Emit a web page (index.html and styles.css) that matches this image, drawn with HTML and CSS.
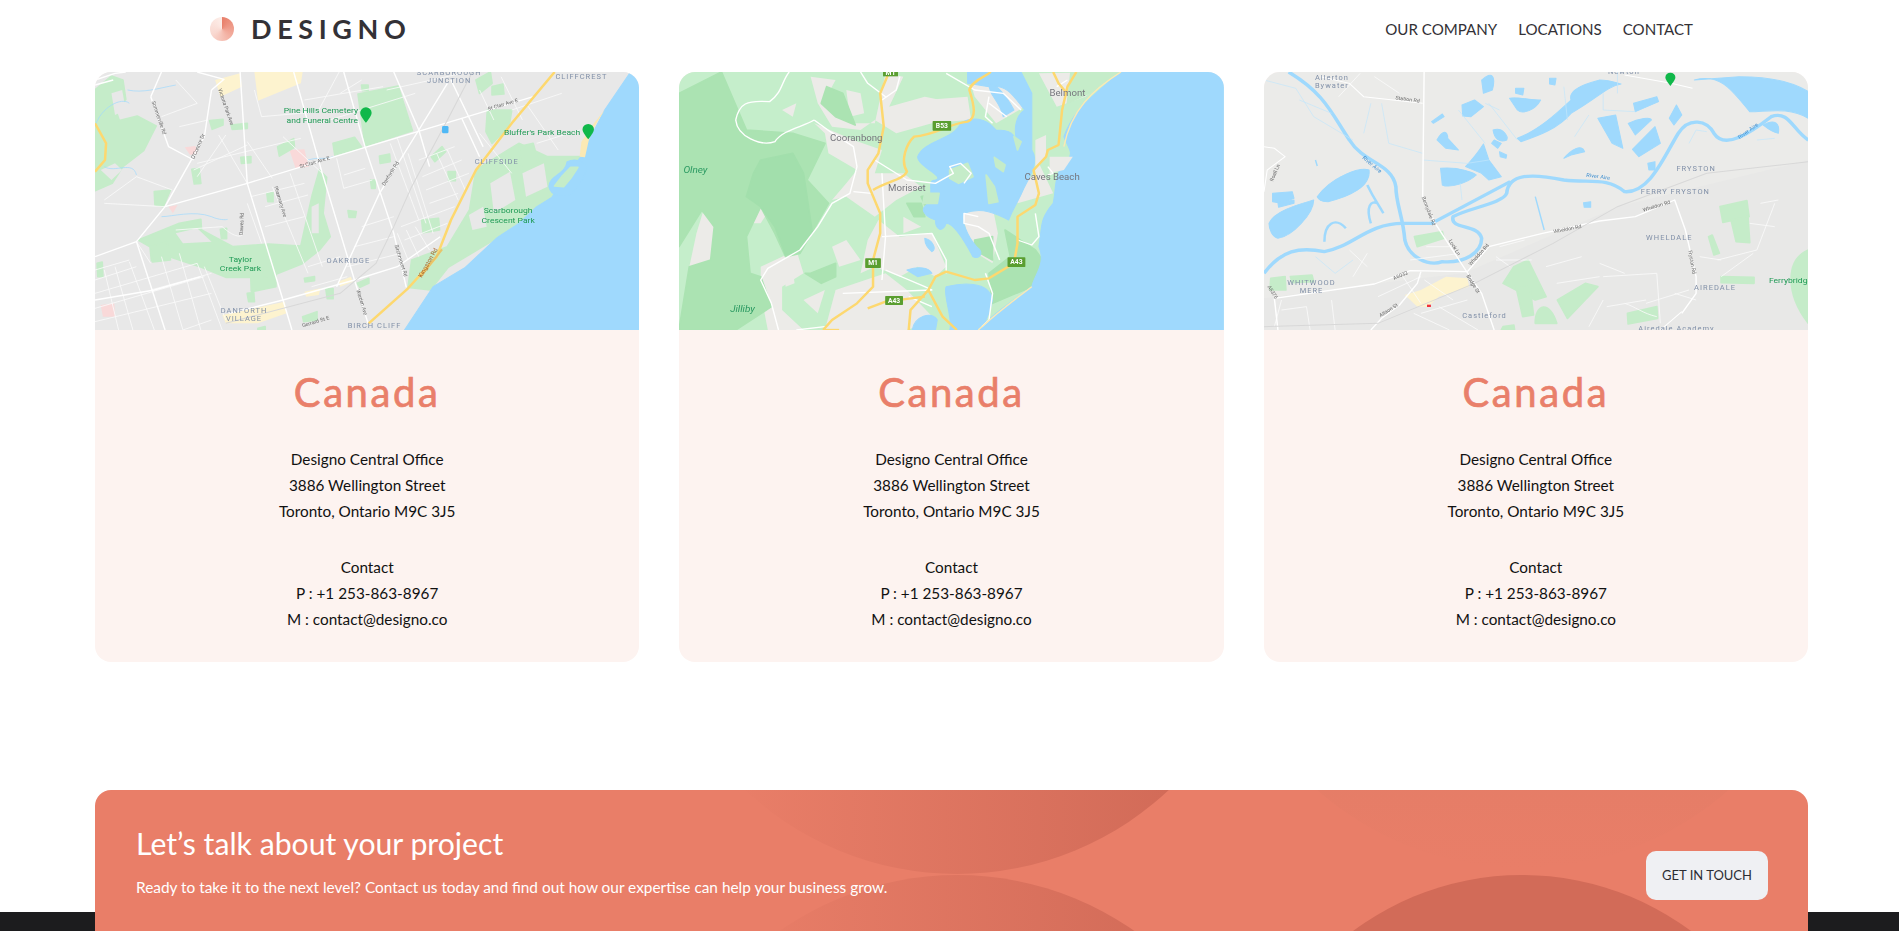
FILE: index.html
```html
<!DOCTYPE html>
<html lang="en">
<head>
<meta charset="utf-8">
<title>Designo - Locations</title>
<link rel="stylesheet" href="styles.css">
</head>
<body>
<header class="topbar">
  <a class="brand" href="#"><span class="brand-mark"></span><span class="brand-name">DESIGNO</span></a>
  <nav class="nav">
    <a href="#">OUR COMPANY</a>
    <a href="#">LOCATIONS</a>
    <a href="#">CONTACT</a>
  </nav>
</header>

<main class="cards">
  <article class="card">
    <svg class="map" viewBox="14 36 1523 774" preserveAspectRatio="none" xmlns="http://www.w3.org/2000/svg">
      <rect class="land-grey" x="14" y="36" width="1523" height="774"/>
      <g class="block">
        <polygon points="460,36 595,36 590,70 470,122"/>
        <polygon points="350,60 420,40 425,80 365,110"/>
        <polygon points="370,765 545,725 550,760 470,790 380,790"/>
        <polygon points="600,695 645,685 640,705 605,710"/>
        <polygon points="695,665 730,650 735,665 700,680"/>
      </g>
      <g class="pink">
        <polygon points="558,270 600,268 612,320 575,325"/>
        <polygon points="265,262 295,258 300,280 280,285"/>
        <polygon points="30,735 68,730 70,770 36,770"/>
        <polygon points="220,440 245,435 232,460"/>
      </g>
      <g class="park">
        <polygon points="14,90 60,48 92,60 100,118 72,150 82,182 132,168 185,198 150,272 92,320 62,370 14,392"/>
        <polygon points="750,102 862,78 902,212 770,258"/>
        <polygon points="135,540 250,490 310,478 312,510 400,560 500,552 590,558 602,500 622,405 642,330 662,352 652,460 672,530 642,570 592,612 522,642 502,682 452,692 452,652 380,652 312,622 222,590 172,602 168,560"/>
        <polygon points="1112,150 1180,150 1172,200 1125,250 1108,215"/>
        <polygon points="1080,330 1200,250 1280,290 1372,290 1292,412 1142,532 1002,622 952,690 890,682 900,600 1000,560 1062,450"/>
        <polygon points="680,250 740,232 760,262 685,285"/>
        <polygon points="525,260 570,236 572,262 530,288"/>
        <polygon points="1080,60 1120,36 1125,70 1090,100"/>
        <polygon points="1125,80 1155,72 1158,102 1125,105"/>
        <polygon points="955,290 985,260 995,275 965,305"/>
        <polygon points="928,480 975,475 978,510 932,518"/>
        <polygon points="1002,335 1022,335 1022,362 1004,362"/>
        <polygon points="810,288 838,282 840,305 812,310"/>
        <polygon points="422,292 450,290 450,308 424,310"/>
        <polygon points="285,328 305,325 310,370 292,372"/>
        <polygon points="722,452 745,455 742,472 725,472"/>
        <polygon points="365,508 382,505 382,536 368,536"/>
        <polygon points="180,395 225,390 205,440 182,435"/>
        <polygon points="495,400 512,398 512,425 498,425"/>
        <polygon points="335,182 372,178 372,195 342,208"/>
        <polygon points="395,195 440,190 440,205 398,208"/>
        <polygon points="760,75 778,75 778,92 762,92"/>
        <polygon points="450,652 520,650 520,680 452,695"/>
        <polygon points="440,700 458,698 460,725 444,725"/>
        <polygon points="595,770 635,755 635,780 598,785"/>
        <polygon points="660,686 680,686 680,716 664,716"/>
        <polygon points="470,805 490,800 490,810 470,810"/>
        <polygon points="785,360 798,360 798,385 788,385"/>
        <polygon points="600,655 628,650 628,662 602,666"/>
        <polygon points="748,670 780,655 780,670 755,682"/>
        <polygon points="20,610 34,606 36,650 22,650"/>
        <polygon points="170,560 215,545 225,600 175,606"/>
        <polygon points="1200,260 1240,250 1260,330 1210,345"/>
      </g>
      <g class="land-holes">
        <polygon points="60,100 90,90 100,150 70,165"/>
        <polygon points="30,330 70,310 90,330 60,360"/>
        <polygon points="1120,370 1175,335 1190,420 1130,460"/>
        <polygon points="1210,340 1270,310 1280,380 1220,410"/>
        <polygon points="240,520 300,505 340,545 260,550"/>
        <polygon points="620,440 640,430 640,520 620,520"/>
        <polygon points="1060,465 1100,440 1110,500 1070,510"/>
      </g>
      <polygon class="water" points="880,810 960,680 1050,622 1140,532 1200,490 1250,440 1292,412 1372,292 1440,150 1510,40 1537,36 1537,810"/>
      <path class="water-fill" d="M1284 380 C1285 345 1330 345 1335 305 C1355 295 1385 300 1388 325 C1385 360 1370 370 1345 405 C1320 410 1290 410 1284 380 Z"/>
      <polygon class="park" points="1320,350 1345,322 1365,322 1345,355 1325,380 1300,378"/>
      <polygon class="sand" points="1370,290 1375,245 1410,190 1440,150 1400,220 1385,292"/>
      <g class="river">
        <path d="M14 200 C30 140 90 110 110 130 M40 320 C70 340 120 300 130 345 M200 470 C230 470 290 450 340 470 C360 480 380 480 385 478 M610 300 C640 290 660 300 680 290 M105 90 C150 100 190 85 240 75"/>
      </g>
      <g class="minor">
        <path d="M300 350 L380 225 M290 330 L440 255 M300 310 L590 235 M360 225 L440 370 M440 245 L510 355 M540 230 L650 340 M640 190 L910 100 M830 90 L1040 40 M460 90 L480 170 L640 155 M600 120 L820 80 M640 150 L700 30"/>
        <path d="M690 295 L710 385 L790 360 M710 345 L770 325 M840 250 L920 480 M860 235 L940 490 M920 300 L1020 260 M930 350 L1040 300 M940 390 L1060 340 M950 430 L1030 400 M870 500 L1020 440 M880 540 L1000 490 M860 520 L890 600 M885 510 L920 590 M910 500 L950 570 M890 280 L960 520 M970 280 L1030 420 M1000 270 L1050 390"/>
        <path d="M14 660 L130 620 M14 700 L300 610 M40 630 L80 810 M70 620 L120 810 M110 605 L180 810 M200 590 L260 810 M250 580 L310 810 M300 610 L370 810 M14 745 L320 650 M14 785 L340 700 M130 545 L170 610 M170 690 L340 640 M320 620 L380 780 M14 630 L110 600 M260 810 L340 780"/>
        <path d="M450 410 L600 370 M490 440 L610 405 M490 500 L600 470 M510 380 L610 640 M560 340 L650 620 M610 620 L700 590 M620 680 L720 650 M760 500 L850 470 M740 560 L850 530 M720 620 L870 580 M130 350 L230 390 M40 430 L210 440 M40 420 L130 350 M240 510 L370 500 C390 520 420 540 430 520 M1090 90 L1130 180 M1150 50 L1210 180 M1220 130 L1310 270 M1180 150 L1320 100 M1250 250 L1370 210 M1090 220 L1180 340 M440 430 L480 550 M700 100 L760 60 M240 60 L300 130 L200 170 M250 200 L330 180"/>
      </g>
      <g class="road">
        <path d="M14 590 L130 545 L210 440 L440 370 L770 262 L1040 175 L1240 110"/>
        <path d="M420 36 L440 370 L540 720 L565 810"/>
        <path d="M570 36 L650 340 L740 660 L778 790"/>
        <path d="M710 36 L770 262 L850 520 L885 682"/>
        <path d="M850 36 L920 210 L950 320"/>
        <path d="M1000 70 L920 210 L810 400 L690 680"/>
        <path d="M130 545 L210 810"/>
        <path d="M340 90 L320 230 L210 440"/>
        <path d="M170 110 L220 260 L290 300"/>
        <path d="M14 60 L70 40 L100 36 M14 75 L65 60 M300 36 L375 58 L340 90 M200 36 L170 110"/>
        <path d="M14 720 L180 690 L310 650 M390 760 L540 720 L740 660 L860 620 L980 530"/>
        <path d="M1010 60 L1100 260 M1040 175 L1090 290"/>
      </g>
      <path class="rail" d="M1070 36 L1000 180 L900 380 L850 500 L800 610 L700 700 L380 790"/>
      <g class="hwy">
        <path d="M780 790 L890 685 L970 590 L1010 480 L1080 330 L1180 190 L1300 36"/>
        <path d="M14 190 L45 250 L42 300 L14 335"/>
      </g>
      <path class="hwy-brown" d="M925 650 L985 568"/>
      <rect class="transit" x="985" y="198" width="18" height="22" rx="4"/>
      <path class="pin" d="M772 188 C758 170 756 162 756 158 A16 16 0 1 1 788 158 C788 162 786 170 772 188 Z"/>
      <path class="pin" d="M1394 238 C1380 220 1378 212 1378 208 A16 16 0 1 1 1410 208 C1410 212 1408 220 1394 238 Z"/>
      <g class="lbl-green">
        <text x="646" y="160" text-anchor="middle">Pine Hills Cemetery</text>
        <text x="650" y="188" text-anchor="middle">and Funeral Centre</text>
        <text x="1265" y="224" text-anchor="middle">Bluffer's Park Beach</text>
        <text x="1170" y="460" text-anchor="middle">Scarborough</text>
        <text x="1170" y="488" text-anchor="middle">Crescent Park</text>
        <text x="421" y="606" text-anchor="middle">Taylor</text>
        <text x="421" y="634" text-anchor="middle">Creek Park</text>
      </g>
      <g class="lbl-area">
        <text x="1005" y="44" text-anchor="middle">SCARBOROUGH</text>
        <text x="1005" y="70" text-anchor="middle">JUNCTION</text>
        <text x="1375" y="56" text-anchor="middle">CLIFFCREST</text>
        <text x="1138" y="311" text-anchor="middle">CLIFFSIDE</text>
        <text x="723" y="608" text-anchor="middle">OAKRIDGE</text>
        <text x="431" y="759" text-anchor="middle">DANFORTH</text>
        <text x="431" y="784" text-anchor="middle">VILLAGE</text>
        <text x="796" y="804" text-anchor="middle">BIRCH CLIFF</text>
      </g>
      <g class="lbl-road">
        <text transform="translate(1115,152) rotate(-18)">St Clair Ave E</text>
        <text transform="translate(588,325) rotate(-18)">St Clair Ave E</text>
        <text transform="translate(825,378) rotate(-60)">Danforth Rd</text>
        <text transform="translate(292,298) rotate(-68)">O'Connor Dr</text>
        <text transform="translate(172,125) rotate(72)">Sommerville Rd</text>
        <text transform="translate(358,88) rotate(72)">Victoria Park Ave</text>
        <text transform="translate(515,380) rotate(74)">Pharmacy Ave</text>
        <text transform="translate(428,525) rotate(-88)">Dawes Rd</text>
        <text transform="translate(852,556) rotate(74)">Birchmount Rd</text>
        <text transform="translate(745,690) rotate(74)">Warden Ave</text>
        <text transform="translate(595,802) rotate(-18)">Gerrard St E</text>
      </g>
      <text class="lbl-hwy" transform="translate(928,654) rotate(-62)">Kingston Rd</text>
    </svg>
    <div class="card-body">
      <h2>Canada</h2>
      <p>Designo Central Office<br>3886 Wellington Street<br>Toronto, Ontario M9C 3J5</p>
      <p>Contact<br>P : +1 253-863-8967<br>M : contact@designo.co</p>
    </div>
  </article>

  <article class="card">
    <svg class="map" viewBox="11 36 1526 774" preserveAspectRatio="none" xmlns="http://www.w3.org/2000/svg">
      <rect class="land-green" x="11" y="36" width="1526" height="774"/>
      <g class="grey-patch">
        <polygon points="380,50 450,60 430,100 500,190 560,190 590,40 640,50 600,140 700,110 790,130 780,180 720,190 620,220 560,180 520,210 440,200 400,130"/>
        <polygon points="390,190 500,240 580,270 560,340 640,340 690,380 620,420 560,470 520,440 480,410 440,420 480,370 510,330 430,280 420,220"/>
        <polygon points="570,480 630,530 720,520 760,620 730,650 680,620 630,650 560,620 520,640 540,540"/>
        <polygon points="240,620 300,590 340,570 360,640 300,680 300,750 360,810 260,810 240,700"/>
        <polygon points="450,690 590,640 650,690 730,780 650,810 420,810"/>
        <polygon points="805,460 890,440 905,520 890,610 830,570"/>
        <polygon points="820,40 940,40 980,140 900,190 840,110"/>
        <polygon points="80,450 110,500 100,600 40,620 60,520"/>
        <polygon points="1020,40 1240,36 1150,110 1070,140 1040,80"/>
        <polygon points="960,430 1060,400 1020,310 1000,350 950,390"/>
        <polygon points="440,560 480,540 520,600 460,620"/>
        <polygon points="700,120 820,110 830,180 700,190"/>
        <polygon points="305,640 330,630 335,670 310,680"/>
        <polygon points="200,440 270,440 240,490 205,490"/>
        <polygon points="480,90 520,100 530,160 490,170"/>
        <polygon points="300,150 340,130 330,170"/>
        <polygon points="640,470 690,500 640,520"/>
        <polygon points="360,720 420,690 400,760"/>
      </g>
      <g class="park-dark">
        <polygon points="11,100 130,36 200,210 330,220 420,250 370,360 430,430 350,580 310,590 280,520 240,440 200,530 210,640 240,650 270,740 170,810 11,810 40,620 100,600 110,500 75,450 11,560"/>
        <polygon points="425,80 470,100 505,195 450,170 410,130"/>
        <polygon points="380,640 450,610 450,650 410,670 365,640"/>
        <polygon points="650,430 690,430 700,470 670,470"/>
        <polygon points="690,410 740,400 730,430 700,435"/>
        <polygon points="840,540 890,530 890,600 840,570"/>
        <polygon points="925,510 1010,570 1030,600 1000,680 890,730 880,640 940,590"/>
      </g>
      <polygon class="park-darker" points="240,300 330,280 360,340 385,520 350,570 310,585 280,500 240,440 200,410 220,340"/>
      <path class="water-fill" d="M1250 36 L1537 36 L1537 810 L850 810 C900 750 980 700 1000 680 C1010 640 1040 610 1020 560 C1030 500 1020 480 1060 430 C1070 380 1060 340 1100 300 C1120 280 1100 260 1090 230 C1110 170 1140 130 1250 36 Z"/>
      <path class="water-fill" d="M820 36 L970 36 L1000 100 L1000 270 C1020 300 1000 340 980 380 C960 430 950 440 935 480 C900 460 860 440 810 460 C800 480 820 530 845 560 C870 580 850 600 835 590 C810 540 780 490 760 490 C750 520 730 510 730 480 C700 470 690 450 700 440 C735 410 700 360 730 360 C760 350 680 320 680 290 C700 240 780 240 800 190 C830 170 870 170 900 210 C940 210 950 220 960 250 C950 220 950 170 980 150 C950 110 930 70 880 80 L820 70 Z"/>
      <path class="water-fill" d="M650 630 C680 620 710 620 720 640 L680 650 Z"/>
      <path class="water-fill" d="M760 680 C800 670 880 660 890 720 C880 770 860 810 850 810 L770 810 C780 780 750 700 760 680 Z"/>
      <path class="water-fill" d="M665 810 C670 770 720 750 735 780 L730 810 Z"/>
      <path class="water-fill" d="M700 535 C720 540 735 565 720 575 C710 565 700 555 700 535 Z"/>
      <path class="water-fill" d="M880 70 C900 70 930 110 950 150 L920 170 C910 120 880 110 880 70 Z"/>
      <polygon class="park" points="770,330 820,310 835,350 795,370 770,355"/>
      <polygon class="park" points="895,292 925,315 920,335 900,320"/>
      <polygon class="park" points="700,400 740,400 735,430 695,430"/>
      <polygon class="park" points="872,345 895,380 905,425 880,430"/>
      <polygon class="park" points="950,230 970,245 960,270"/>
      <polygon class="land-tan" points="1010,240 1040,225 1040,290 1010,320"/>
      <polygon class="land-tan" points="1050,290 1115,290 1090,330 1050,340"/>
      <polygon class="park" points="1110,36 1240,36 1160,100 1100,130"/>
      <g class="road">
        <path d="M520 36 L540 70 L590 110 M630 50 L620 90 L580 120"/>
        <path d="M390 180 L435 215 L500 260 L510 320 L490 400 L440 430 L400 500 L350 570 L260 625 L240 660 L270 730 L290 810"/>
        <path d="M170 180 C180 130 200 120 265 125 C300 100 300 60 320 36"/>
        <path d="M170 180 C175 230 240 260 280 245 C300 210 360 200 390 180"/>
        <path d="M500 395 L550 400 M580 340 L590 530 L580 660 M580 530 L720 520 L760 600 L760 640"/>
        <path d="M560 300 L650 360 L730 370 L780 340 L770 320 L800 310 L830 340 L810 370 M590 630 L700 680 L720 690 L470 700"/>
        <path d="M850 470 L810 460 L810 490 L850 500 L880 520 L910 600 M870 640 L890 700 L880 780 L860 800"/>
        <path d="M760 40 L840 90 L920 100 L970 150 M880 110 L870 170 L890 190 M880 130 L930 170"/>
        <path d="M1010 460 L1020 530 L1000 555 L960 540 M1045 320 L1060 340 L1045 345 M1100 60 L1070 80"/>
        <path d="M655 710 L720 740 M420 800 L340 810"/>
      </g>
      <path class="coast" d="M1250 36 C1170 90 1110 150 1090 260"/>
      <path class="coast" d="M850 810 C900 760 950 720 1000 680"/>
      <g class="hwy">
        <path d="M600 36 L575 100 L585 200 L570 280 L540 330 L540 370 L575 460 L575 520 L555 600 L555 680 L510 730 L440 780 L415 810"/>
        <path d="M555 390 C590 365 640 360 650 335 C630 300 650 250 670 230 C730 225 770 190 820 185 C845 175 840 140 825 90 C830 65 870 50 885 36"/>
        <path d="M950 610 L960 550 L960 470 L1010 435 L1020 400 L1005 330 L1040 290 L1045 270 L1075 255 L1085 150 L1100 80 L1125 36"/>
        <path d="M1060 36 L1075 70 L1098 100"/>
        <path d="M950 610 L880 655 L840 660 L760 635 L730 650 L710 690 L660 750 L655 810"/>
        <path d="M710 690 L750 770 L790 810 M540 745 L590 725 L700 710"/>
        <path d="M415 810 L460 810"/>
      </g>
      <g class="shield">
        <rect x="722" y="183" width="52" height="29" rx="2"/>
        <rect x="533" y="595" width="44" height="29" rx="2"/>
        <rect x="932" y="592" width="50" height="29" rx="2"/>
        <rect x="589" y="708" width="50" height="27" rx="2"/>
        <rect x="583" y="36" width="42" height="13"/>
      </g>
      <g class="shield-text">
        <text x="748" y="204" text-anchor="middle">B53</text>
        <text x="555" y="616" text-anchor="middle">M1</text>
        <text x="957" y="613" text-anchor="middle">A43</text>
        <text x="614" y="728" text-anchor="middle">A43</text>
        <text x="604" y="46" text-anchor="middle">M1</text>
      </g>
      <g class="lbl-town">
        <text x="508" y="244" text-anchor="middle">Cooranbong</text>
        <text x="650" y="392" text-anchor="middle">Morisset</text>
        <text x="1057" y="360" text-anchor="middle">Caves Beach</text>
        <text x="1100" y="108" text-anchor="middle">Belmont</text>
      </g>
      <g class="lbl-park">
        <text x="57" y="340" text-anchor="middle">Olney</text>
        <text x="189" y="757" text-anchor="middle">Jilliby</text>
      </g>
    </svg>
    <div class="card-body">
      <h2>Canada</h2>
      <p>Designo Central Office<br>3886 Wellington Street<br>Toronto, Ontario M9C 3J5</p>
      <p>Contact<br>P : +1 253-863-8967<br>M : contact@designo.co</p>
    </div>
  </article>

  <article class="card">
    <svg class="map" viewBox="11 36 1523 774" preserveAspectRatio="none" xmlns="http://www.w3.org/2000/svg">
      <rect class="land-pale" x="11" y="36" width="1523" height="774"/>
      <polygon class="land-urban" points="11,715 330,670 570,640 1000,440 1534,300 1534,810 11,810"/>
      <g class="block">
        <polygon points="405,705 450,690 520,650 580,655 585,680 500,710 470,740 440,740"/>
      </g>
      <g class="park">
        <polygon points="30,655 70,650 72,690 28,690"/>
        <polygon points="85,650 145,645 150,665 90,668"/>
        <polygon points="432,530 510,515 515,535 440,560"/>
        <polygon points="710,620 750,600 800,710 770,720 680,670"/>
        <polygon points="715,675 755,680 765,765 735,770"/>
        <polygon points="832,720 910,670 945,680 900,730 860,775"/>
        <path d="M770 790 C770 730 810 720 830 790 Z"/>
        <polygon points="1028,760 1110,740 1112,775 1030,792"/>
        <polygon points="1287,440 1362,422 1368,470 1295,487"/>
        <polygon points="1318,480 1365,470 1370,548 1332,545"/>
        <polygon points="1255,530 1265,525 1285,580 1270,585"/>
        <polygon points="1290,650 1382,652 1382,670 1290,668"/>
        <path d="M1534 570 C1470 600 1470 700 1534 790 Z"/>
        <polygon points="680,800 710,795 712,810 675,810"/>
      </g>
      <g class="water-line">
        <path d="M80 36 C180 100 200 160 250 240 C290 310 370 310 380 380 C380 430 400 470 405 540 C415 590 470 620 510 605 C570 610 620 580 620 535 C610 490 530 510 540 470 C580 445 680 430 690 400 C695 340 760 340 850 360 C920 370 970 350 1020 395 C1090 400 1130 290 1170 220 C1200 170 1250 180 1270 220 C1300 270 1370 220 1430 170 C1480 150 1490 210 1534 240"/>
        <path d="M11 640 C60 570 110 560 180 575 C260 560 300 490 400 490 L480 490 L700 365"/>
      </g>
      <g class="water-fill">
        <path d="M1215 60 C1290 40 1320 90 1370 155 C1420 155 1480 140 1534 175 L1534 95 C1490 65 1420 50 1340 50 Z"/>
        <path d="M720 235 C780 210 830 160 870 120 C860 85 920 70 950 60 C980 60 1000 70 1010 72 C970 80 950 110 870 160 C830 210 770 230 730 245 Z"/>
        <path d="M25 490 C40 450 120 430 150 420 C150 460 90 530 50 535 C35 530 25 510 25 490 Z"/>
        <path d="M160 410 C200 350 280 320 305 330 C310 380 250 410 190 425 C170 425 165 420 160 410 Z"/>
        <path d="M35 400 L90 395 L95 415 L60 430 L35 425 Z"/>
        <path d="M50 428 L95 420 L95 430 L52 442 Z"/>
        <path d="M505 325 C560 320 600 340 605 345 C580 370 530 385 510 375 Z"/>
        <path d="M575 320 C610 280 620 260 625 252 L640 300 L675 350 L640 360 L620 340 Z"/>
        <path d="M495 240 C510 210 525 210 525 235 L555 270 L520 265 Z"/>
        <path d="M652 210 C680 200 695 230 690 240 C670 250 655 235 652 210 Z"/>
        <path d="M655 240 L675 250 L665 265 L648 250 Z"/>
        <path d="M670 275 L690 285 L688 295 L672 290 Z"/>
        <path d="M565 135 L600 120 L625 140 L590 170 L567 168 Z"/>
        <path d="M698 115 C720 110 755 120 785 120 C770 150 735 165 720 150 Z"/>
        <path d="M620 60 C650 30 660 50 650 90 L625 100 Z"/>
        <path d="M945 175 L995 165 L1015 265 L985 250 Z"/>
        <path d="M1030 190 C1060 175 1095 170 1095 180 L1050 225 Z"/>
        <path d="M1042 268 L1105 200 L1120 250 L1060 290 Z"/>
        <path d="M1145 175 L1165 135 L1180 165 L1158 195 Z"/>
        <path d="M1045 130 L1110 110 L1115 125 L1050 155 Z"/>
        <path d="M1408 195 C1440 175 1455 190 1450 220 C1430 215 1420 205 1408 195 Z"/>
        <path d="M850 295 C870 270 900 250 908 275 L870 285 Z"/>
        <path d="M715 85 L738 85 L735 105 L715 100 Z"/>
        <path d="M810 55 L828 55 L825 75 L810 72 Z"/>
        <path d="M480 185 L510 162 L515 170 L485 190 Z"/>
        <path d="M905 428 L925 425 L925 442 L907 442 Z"/>
        <path d="M1085 310 L1105 305 L1105 330 L1088 330 Z"/>
      </g>
      <g class="water-thin">
        <path d="M300 375 C320 420 330 430 345 460 M310 490 C295 440 310 420 330 430 M180 545 C180 490 210 470 240 505"/>
      </g>
      <g class="stream">
        <path d="M770 410 L795 510 M155 300 L160 318"/>
      </g>
      <g class="stream-thin">
        <path d="M11 60 L100 85 L150 170 L260 240 M340 130 L360 250 L455 280 M310 130 L290 220 M640 130 L720 240 M555 150 L630 250 M640 300 L580 310 L455 300 M960 100 L960 150 L1050 155 M850 80 L860 180 M880 230 L920 165 M1390 240 L1440 235 M1200 250 L1220 210 L1250 215 M200 160 L110 120 M155 590 L210 640 L260 600 M560 370 L565 420 M1000 36 L1000 100 M630 130 L670 150"/>
      </g>
      <g class="minor">
        <path d="M60 720 L40 800 M60 750 L130 740 L140 810 M200 720 L210 810 M330 710 L450 650 M400 650 L450 730 M460 660 L540 720 M430 760 L530 810 M450 760 L580 720 M500 740 L610 810 M660 590 L700 620 M670 560 L740 540 M800 620 L900 590 M830 670 L950 650 M960 650 L1110 640 M950 610 L1020 640 M1110 640 L1120 790 M970 740 L1080 720 M1080 730 L1200 690 M920 800 L960 720 M1160 700 L1220 720 M1280 600 L1390 570 L1440 430 M1290 650 L1380 580 M1400 430 L1450 420 M1370 490 L1440 500 M1230 590 L1290 600 M1020 730 C1050 740 1070 760 1110 770 M280 40 L220 110 M320 50 L390 100 M300 620 L250 570 M300 580 L260 650 M465 560 L530 560 M420 600 L560 580 M660 600 L760 600"/>
      </g>
      <g class="road-thin">
        <path d="M170 50 L250 70 L290 110 L455 130"/>
        <path d="M11 395 L20 330 L70 290 L40 265 L11 260"/>
        <path d="M1020 45 L1150 70 L1210 85"/>
        <path d="M1180 755 L1120 810"/>
      </g>
      <g class="road">
        <path d="M459 36 L455 410 L490 490 L575 630 L620 700 L655 810"/>
        <path d="M40 715 L50 810"/>
        <path d="M40 715 L320 672 L420 632 L580 635 L640 560 L790 520 L950 483 L1050 470 L1160 420 L1190 510 L1220 650 L1220 700 L1180 760"/>
        <path d="M450 635 L440 670 L390 735 L340 775 L310 810"/>
      </g>
      <path class="rail" d="M11 800 L330 790 L600 670 L820 550 L1000 440 L1250 340 L1534 305"/>
      <polygon class="red-dot" points="467,734 478,734 478,741 467,741"/>
      <path class="pin" d="M1148 78 C1136 62 1134 56 1134 52 A14 14 0 1 1 1162 52 C1162 56 1160 62 1148 78 Z"/>
      <g class="lbl-area">
        <text x="201" y="60" text-anchor="middle">Allerton</text>
        <text x="201" y="84" text-anchor="middle">Bywater</text>
        <text x="1018" y="42" text-anchor="middle">Newton</text>
        <text x="1220" y="333" text-anchor="middle">FRYSTON</text>
        <text x="1162" y="402" text-anchor="middle">FERRY FRYSTON</text>
        <text x="1145" y="541" text-anchor="middle">WHELDALE</text>
        <text x="144" y="675" text-anchor="middle">WHITWOOD</text>
        <text x="144" y="698" text-anchor="middle">MERE</text>
        <text x="1273" y="691" text-anchor="middle">AIREDALE</text>
        <text x="628" y="774" text-anchor="middle">Castleford</text>
        <text x="1165" y="812" text-anchor="middle">Airedale Academy</text>
      </g>
      <g class="lbl-road">
        <text transform="translate(378,118) rotate(8)">Station Rd</text>
        <text transform="translate(36,365) rotate(-68)">Roall Ln</text>
        <text transform="translate(452,412) rotate(70)">Bennydale Rd</text>
        <text transform="translate(527,542) rotate(60)">Lock Ln</text>
        <text transform="translate(590,618) rotate(-50)">Wheldon Rd</text>
        <text transform="translate(822,520) rotate(-12)">Wheldon Rd</text>
        <text transform="translate(1073,455) rotate(-18)">Wheldon Rd</text>
        <text transform="translate(1198,572) rotate(80)">Fryston Rd</text>
        <text transform="translate(375,660) rotate(-25)">A6032</text>
        <text transform="translate(20,680) rotate(60)">A6376</text>
        <text transform="translate(338,772) rotate(-35)">Albion St</text>
        <text transform="translate(577,648) rotate(60)">Bridge St</text>
      </g>
      <g class="lbl-river">
        <text transform="translate(285,295) rotate(42)">River Aire</text>
        <text transform="translate(912,350) rotate(8)">River Aire</text>
        <text transform="translate(1342,238) rotate(-38)">River Aire</text>
      </g>
      <g class="lbl-green">
        <text x="1484" y="670" text-anchor="middle">Ferrybridge</text>
      </g>
    </svg>
    <div class="card-body">
      <h2>Canada</h2>
      <p>Designo Central Office<br>3886 Wellington Street<br>Toronto, Ontario M9C 3J5</p>
      <p>Contact<br>P : +1 253-863-8967<br>M : contact@designo.co</p>
    </div>
  </article>
</main>

<section class="cta">
  <svg class="cta-art" viewBox="0 0 1713 170" xmlns="http://www.w3.org/2000/svg" aria-hidden="true">
    <defs>
      <linearGradient id="fadeRight" gradientUnits="userSpaceOnUse" x1="640" y1="0" x2="1080" y2="0">
        <stop offset="0" stop-color="#d26b58" stop-opacity="0"/>
        <stop offset="1" stop-color="#d26b58"/>
      </linearGradient>
      <linearGradient id="fadeDown" x1="0" y1="0" x2="0" y2="1">
        <stop offset="0.75" stop-color="#e27c66"/>
        <stop offset="1" stop-color="#e27c66" stop-opacity="0"/>
      </linearGradient>
    </defs>
    <circle cx="862" cy="-225" r="309" fill="url(#fadeRight)"/>
    <circle cx="862" cy="394" r="309" fill="url(#fadeRight)"/>
    <circle cx="1428" cy="-232" r="310" fill="url(#fadeDown)"/>
    <circle cx="1427" cy="368" r="283" fill="#d26b58"/>
  </svg>
  <div class="cta-copy">
    <h2>Let’s talk about your project</h2>
    <p>Ready to take it to the next level? Contact us today and find out how our expertise can help your business grow.</p>
  </div>
  <a class="cta-btn" href="#">GET IN TOUCH</a>
</section>
<footer class="footer"></footer>
</body>
</html>
```

FILE: styles.css
```css
* { box-sizing: border-box; }
html, body { margin: 0; height: 931px; overflow: hidden; background: #fff; }
body { font-family: "Lato", "Open Sans", sans-serif; color: #111; }
a { text-decoration: none; color: inherit; }

.topbar { height: 72px; display: flex; align-items: center; justify-content: space-between; padding: 0 206px 14px 210px; }
.brand { display: flex; align-items: center; gap: 17px; }
.brand-mark { width: 24px; height: 24px; border-radius: 50%; background: conic-gradient(#e87f6a 0deg, #f2ab9c 120deg, #f9d8d0 240deg, #fdeee9 360deg); }
.brand-name { font-size: 27px; font-weight: 700; letter-spacing: 5.6px; line-height: 30px; color: #333136; }
.nav { display: flex; gap: 21px; font-size: 15.1px; line-height: 20px; color: #333136; }

.cards { display: grid; grid-template-columns: repeat(3, 1fr); gap: 40px; padding: 0 91px 0 95px; }
.card { border-radius: 16px; overflow: hidden; background: #fdf3f0; }
.map { display: block; width: 100%; height: 258px; filter: blur(.6px); }
.card-body { height: 332px; padding-top: 38px; text-align: center; }
.card-body h2 { margin: 0 0 30px; font-size: 40px; line-height: 48px; font-weight: 400; letter-spacing: 2.6px; color: #e97f6a; -webkit-text-stroke: .7px #e97f6a; }
.card-body p { margin: 0 0 30px; font-size: 15.3px; line-height: 26px; color: #111; }

.cta { position: relative; z-index: 1; height: 170px; margin: 128px 91px -48px 95px; padding: 0 40px 0 41px; border-radius: 16px; overflow: hidden; background: #e97e68; color: #fff; display: flex; align-items: center; justify-content: space-between; }
.cta-art { position: absolute; left: 0; top: 0; width: 100%; height: 100%; }
.cta-copy { position: relative; align-self: flex-start; padding-top: 33px; }
.cta-copy h2 { margin: 0 0 12px; font-size: 30.2px; line-height: 40px; font-weight: 400; }
.cta-copy p { margin: 0; font-size: 15.4px; line-height: 24px; }
.cta-btn { position: relative; width: 122px; height: 49px; border-radius: 10px; background: #eff0f3; color: #2c2d33; font-size: 13px; display: flex; align-items: center; justify-content: center; }
.footer { height: 100px; background: #1c1c1e; }

/* map fills */
.land-grey, .land-holes polygon { fill: #e8e8e8; }
.land-green { fill: #c5eecb; }
.land-pale { fill: #ebebe9; }
.land-urban { fill: #e8e8e7; }
.land-tan, .grey-patch polygon { fill: #ecebe8; }
.park, .park polygon, .park path { fill: #c5ecc9; stroke: #c5ecc9; stroke-width: 5; stroke-linejoin: round; }
.park-dark polygon { fill: #abe3b2; stroke: #abe3b2; stroke-width: 5; stroke-linejoin: round; }
.park-darker { fill: #a2dfac; stroke: #a2dfac; stroke-width: 5; stroke-linejoin: round; }
.grey-patch polygon, .land-holes polygon { stroke-linejoin: round; }
.water, .water-fill, .water-fill path { fill: #9fd9fd; stroke: #9fd9fd; stroke-width: 3; stroke-linejoin: round; }
.block polygon { fill: #fdf3cf; }
.pink polygon { fill: #f9d9d9; }
.sand { fill: #fbe9b5; }
.river path { fill: none; stroke: #9fd9fd; stroke-width: 2; }
.minor path { fill: none; stroke: #fafafa; stroke-width: 2.4; }
.road path { fill: none; stroke: #fff; stroke-width: 4; stroke-linejoin: round; }
.road-thin path { fill: none; stroke: #fff; stroke-width: 3; }
.coast { fill: none; stroke: #fbe9b5; stroke-width: 4; }
.rail { fill: none; stroke: #d8d8d8; stroke-width: 3; }
.hwy path { fill: none; stroke: #fdd86f; stroke-width: 7; stroke-linejoin: round; }
.hwy-brown { stroke: #e8c46a; stroke-width: 6; }
.transit { fill: #4fb8f5; }
.pin { fill: #10b84a; }
.red-dot { fill: #f0303c; }
.water-line path { fill: none; stroke: #9fd9fd; stroke-width: 10; stroke-linejoin: round; }
.water-thin path { fill: none; stroke: #9fd9fd; stroke-width: 7; }
.stream path { fill: none; stroke: #9fd9fd; stroke-width: 4; }
.stream-thin path { fill: none; stroke: #c3e6fa; stroke-width: 2; }
.shield rect { fill: #5a9e30; }

/* map labels */
.map text { font-family: "Roboto", sans-serif; }
.lbl-green text { font-size: 24px; fill: #1f9a55; }
.lbl-area text { font-size: 21px; letter-spacing: 2.8px; fill: #8190a8; }
.lbl-road text { font-size: 15px; fill: #6a6a6a; }
.lbl-hwy { font-size: 18px; fill: #a5602a; }
.lbl-town text { font-size: 27px; fill: #75757c; }
.lbl-park text { font-size: 28px; font-style: italic; fill: #2b9a62; }
.lbl-river text { font-size: 16px; fill: #3f8fd0; }
.shield-text text { font-size: 19px; font-weight: 700; fill: #fff; }
```
